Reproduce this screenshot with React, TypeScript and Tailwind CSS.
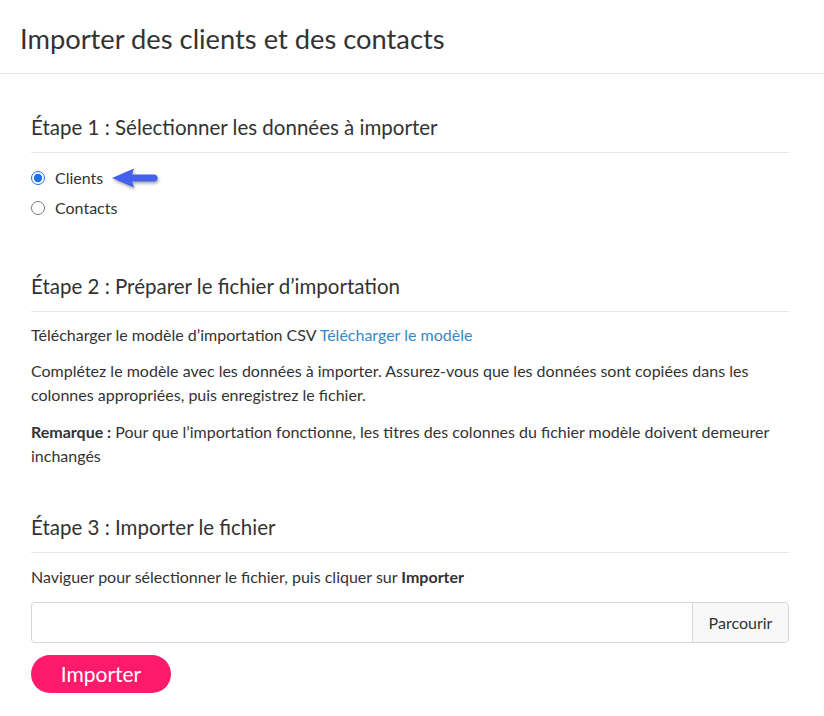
import { useState } from "react";

/* Import page — clients / contacts CSV import in three steps */

function StepHeading({ children }: { children: React.ReactNode }) {
  return (
    <h2 className="border-b border-[#e8e8e8] pb-[10px] text-[20.5px] leading-[30px] text-[#333]">
      {children}
    </h2>
  );
}

function PointerArrow() {
  return (
    <svg width="50" height="26" viewBox="0 0 50 26" className="ml-[8px] drop-shadow-[1px_2px_1.5px_rgba(0,0,0,0.35)]">
      <path d="M1 13 L23 3.5 L21 9.5 L43 9.5 A3.5 3.5 0 0 1 43 16.5 L21 16.5 L23 22.5 Z" fill="#4560ef" />
    </svg>
  );
}

export default function App() {
  const [kind, setKind] = useState("clients");

  return (
    <div className="min-h-[716px] bg-white font-['Lato',sans-serif] text-[16px] text-[#333]">
      <header className="flex h-[74px] items-center border-b border-[#e5e5e5] px-[20px] pt-[6px]">
        <h1 className="text-[27.3px] text-[#333]">Importer des clients et des contacts</h1>
      </header>

      <main className="pl-[31px] pr-[35px]">
        {/* Step 1 */}
        <section className="pt-[38px]">
          <StepHeading>Étape 1 : Sélectionner les données à importer</StepHeading>
          <div className="mt-[14px] flex flex-col gap-[8px]">
            {[
              { id: "clients", label: "Clients" },
              { id: "contacts", label: "Contacts" },
            ].map((opt) => (
              <label key={opt.id} className="flex h-[22px] items-center">
                <input
                  type="radio"
                  name="kind"
                  checked={kind === opt.id}
                  onChange={() => setKind(opt.id)}
                  className="m-0 h-[14px] w-[14px] accent-[#1a73e8]"
                />
                <span className="ml-[10px]">{opt.label}</span>
                {opt.id === "clients" && <PointerArrow />}
              </label>
            ))}
          </div>
        </section>

        {/* Step 2 */}
        <section className="pt-[52px]">
          <StepHeading>Étape 2 : Préparer le fichier d’importation</StepHeading>
          <p className="mt-[11px] leading-[24px]">
            Télécharger le modèle d’importation CSV{" "}
            <a href="#" className="text-[#3a87c8]">Télécharger le modèle</a>
          </p>
          <p className="mt-[12px] leading-[24px]">
            Complétez le modèle avec les données à importer. Assurez-vous que les données sont copiées dans les
            colonnes appropriées, puis enregistrez le fichier.
          </p>
          <p className="mt-[13px] leading-[24px]">
            <b className="font-bold">Remarque :</b> Pour que l’importation fonctionne, les titres des colonnes du
            fichier modèle doivent demeurer inchangés
          </p>
        </section>

        {/* Step 3 */}
        <section className="pt-[44px]">
          <StepHeading>Étape 3 : Importer le fichier</StepHeading>
          <p className="mt-[12px] leading-[24px]">
            Naviguer pour sélectionner le fichier, puis cliquer sur <b className="font-bold">Importer</b>
          </p>
          <div className="mt-[13px] flex h-[41px] rounded-[4px] border border-[#d3d6df]">
            <div className="flex-1" />
            <button className="w-[96px] rounded-r-[4px] border-l border-[#d3d6df] bg-[#f8f8f8] text-[#333]">
              Parcourir
            </button>
          </div>
          <button className="mt-[12px] h-[38px] w-[140px] rounded-full bg-[#ff1a6b] text-[21px] text-white">
            Importer
          </button>
        </section>
      </main>
    </div>
  );
}
